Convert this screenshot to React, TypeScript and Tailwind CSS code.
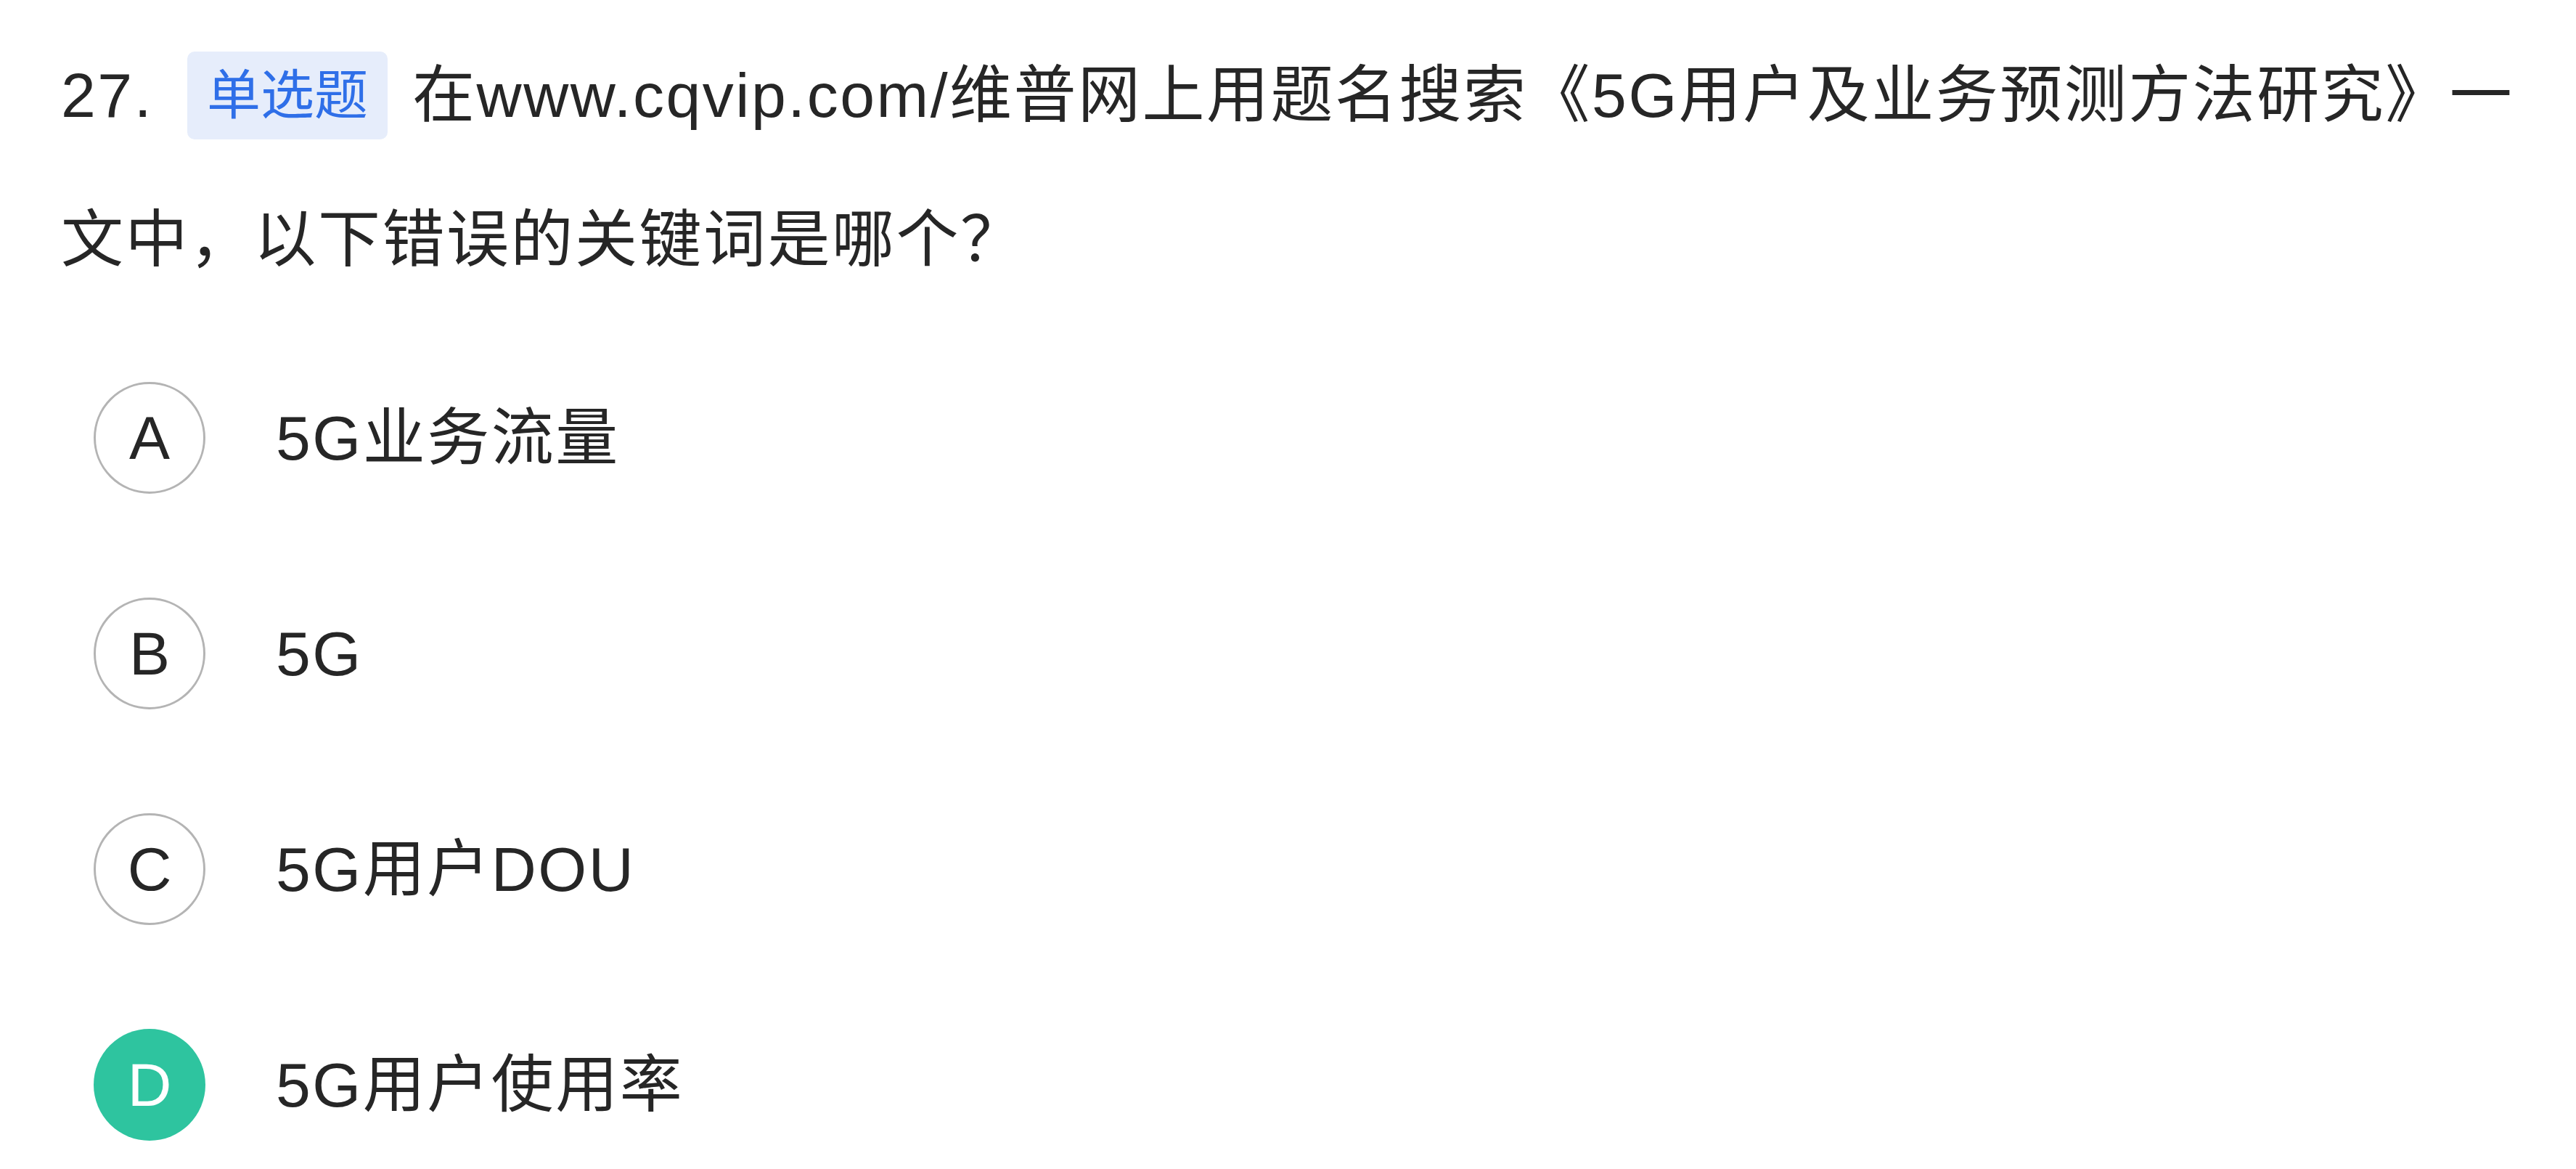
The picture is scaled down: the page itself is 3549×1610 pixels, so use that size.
const options = [
  { key: "A", text: "5G业务流量" },
  { key: "B", text: "5G" },
  { key: "C", text: "5G用户DOU" },
  { key: "D", text: "5G用户使用率", picked: true },
];

export default function App() {
  return (
    <div className="min-h-screen bg-white px-[84px] pt-[32px] font-['Liberation_Sans','Noto_Sans_CJK_SC',sans-serif] text-[86px] tracking-[2.5px] text-[#262626]">
      <div className="flex h-[199px] items-center whitespace-nowrap">
        <span>27.</span>
        <span className="ml-[47px] flex h-[121px] items-center rounded-[10px] bg-[#e6edfb] px-[27px] text-[74px] tracking-normal text-[#2f6fe8]">
          单选题
        </span>
        <span className="ml-[34px]">
          在www.cqvip.com/维普网上用题名搜索《5G用户及业务预测方法研究》一
        </span>
      </div>
      <div className="flex h-[199px] items-center whitespace-nowrap">
        文中，以下错误的关键词是哪个？
      </div>
      <div className="mt-[96px] flex flex-col gap-[143px] pl-[45px]">
        {options.map((o) => (
          <div key={o.key} className="flex items-center gap-[97px]">
            <div
              className={
                o.picked
                  ? "flex h-[154px] w-[154px] items-center justify-center rounded-full bg-[#2ec49f] text-[84px] tracking-normal text-white"
                  : "flex h-[154px] w-[154px] items-center justify-center rounded-full border-[3px] border-[#b4b4b4] text-[84px] tracking-normal"
              }
            >
              {o.key}
            </div>
            <div className="whitespace-nowrap">{o.text}</div>
          </div>
        ))}
      </div>
    </div>
  );
}
